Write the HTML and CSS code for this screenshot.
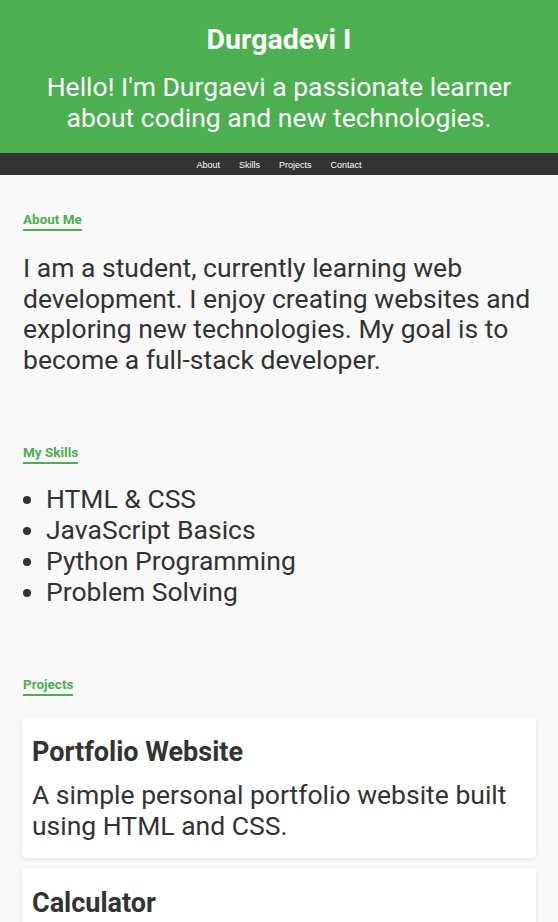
FILE: index.html
```html
<!DOCTYPE html>
<html lang="en">
<head>
<meta charset="utf-8">
<title>Durgadevi I</title>
<link rel="stylesheet" href="styles.css">
</head>
<body>
<header class="hero">
  <h1 class="hero-title">Durgadevi I</h1>
  <p class="hero-sub">Hello! I'm Durgaevi a passionate learner about coding and new technologies.</p>
</header>
<nav class="nav">
  <a class="nav-link" href="#about">About</a>
  <a class="nav-link" href="#skills">Skills</a>
  <a class="nav-link" href="#projects">Projects</a>
  <a class="nav-link" href="#contact">Contact</a>
</nav>
<main class="content">
  <section class="section" id="about">
    <h2 class="section-title">About Me</h2>
    <p class="text">I am a student, currently learning web development. I enjoy creating websites and exploring new technologies. My goal is to become a full-stack developer.</p>
  </section>
  <section class="section" id="skills">
    <h2 class="section-title">My Skills</h2>
    <ul class="skills">
      <li>HTML &amp; CSS</li>
      <li>JavaScript Basics</li>
      <li>Python Programming</li>
      <li>Problem Solving</li>
    </ul>
  </section>
  <section class="section" id="projects">
    <h2 class="section-title">Projects</h2>
    <div class="cards">
      <div class="card">
        <h3 class="card-title">Portfolio Website</h3>
        <p class="card-text">A simple personal portfolio website built using HTML and CSS.</p>
      </div>
      <div class="card">
        <h3 class="card-title">Calculator</h3>
        <p class="card-text">A basic calculator built using HTML, CSS and JavaScript.</p>
      </div>
    </div>
  </section>
</main>
</body>
</html>
```

FILE: styles.css
```css
* { box-sizing: border-box; }
html, body { margin: 0; padding: 0; }
body {
  font-family: Roboto, "Noto Sans", sans-serif;
  background: #f9f9f9;
  color: #333;
}
.hero {
  background: #4caf50;
  color: #fff;
  text-align: center;
  padding: 22px 30px 20px;
}
.hero-title {
  margin: 0;
  font-size: 28.5px;
  line-height: 36px;
  font-weight: 700;
}
.hero-sub {
  margin: 13px 0 0;
  font-size: 26.5px;
  line-height: 31px;
}
.nav {
  background: #333;
  height: 22px;
  display: flex;
  justify-content: center;
  align-items: center;
  gap: 19px;
  padding-top: 1px;
}
.nav-link {
  color: #fff;
  text-decoration: none;
  font-family: "Liberation Sans", Arial, sans-serif;
  font-size: 9px;
}
.content {
  padding: 34px 22px 40px 23px;
  display: flex;
  flex-direction: column;
  gap: 67px;
}
.section-title {
  display: inline-block;
  margin: 0 0 22px;
  font-size: 13.5px;
  line-height: 16px;
  font-weight: 700;
  color: #4caf50;
  padding-bottom: 2px;
  border-bottom: 2px solid #4caf50;
}
.text {
  margin: 0;
  font-size: 26.5px;
  line-height: 30.5px;
}
.skills {
  margin: -3px 0 0;
  padding-left: 23px;
  font-size: 26.5px;
  line-height: 31px;
}
.cards {
  display: flex;
  flex-direction: column;
  gap: 10px;
  margin: -1px 0 0 -1px;
}
.card {
  background: #fff;
  border-radius: 4px;
  box-shadow: 0 1px 4px rgba(0,0,0,0.1);
  padding: 20px 10px 17px 10px;
}
.card-title {
  margin: 0;
  font-size: 27px;
  line-height: 30px;
  font-weight: 700;
}
.card-text {
  margin: 12px 0 0;
  font-size: 26.5px;
  line-height: 31px;
}
```
